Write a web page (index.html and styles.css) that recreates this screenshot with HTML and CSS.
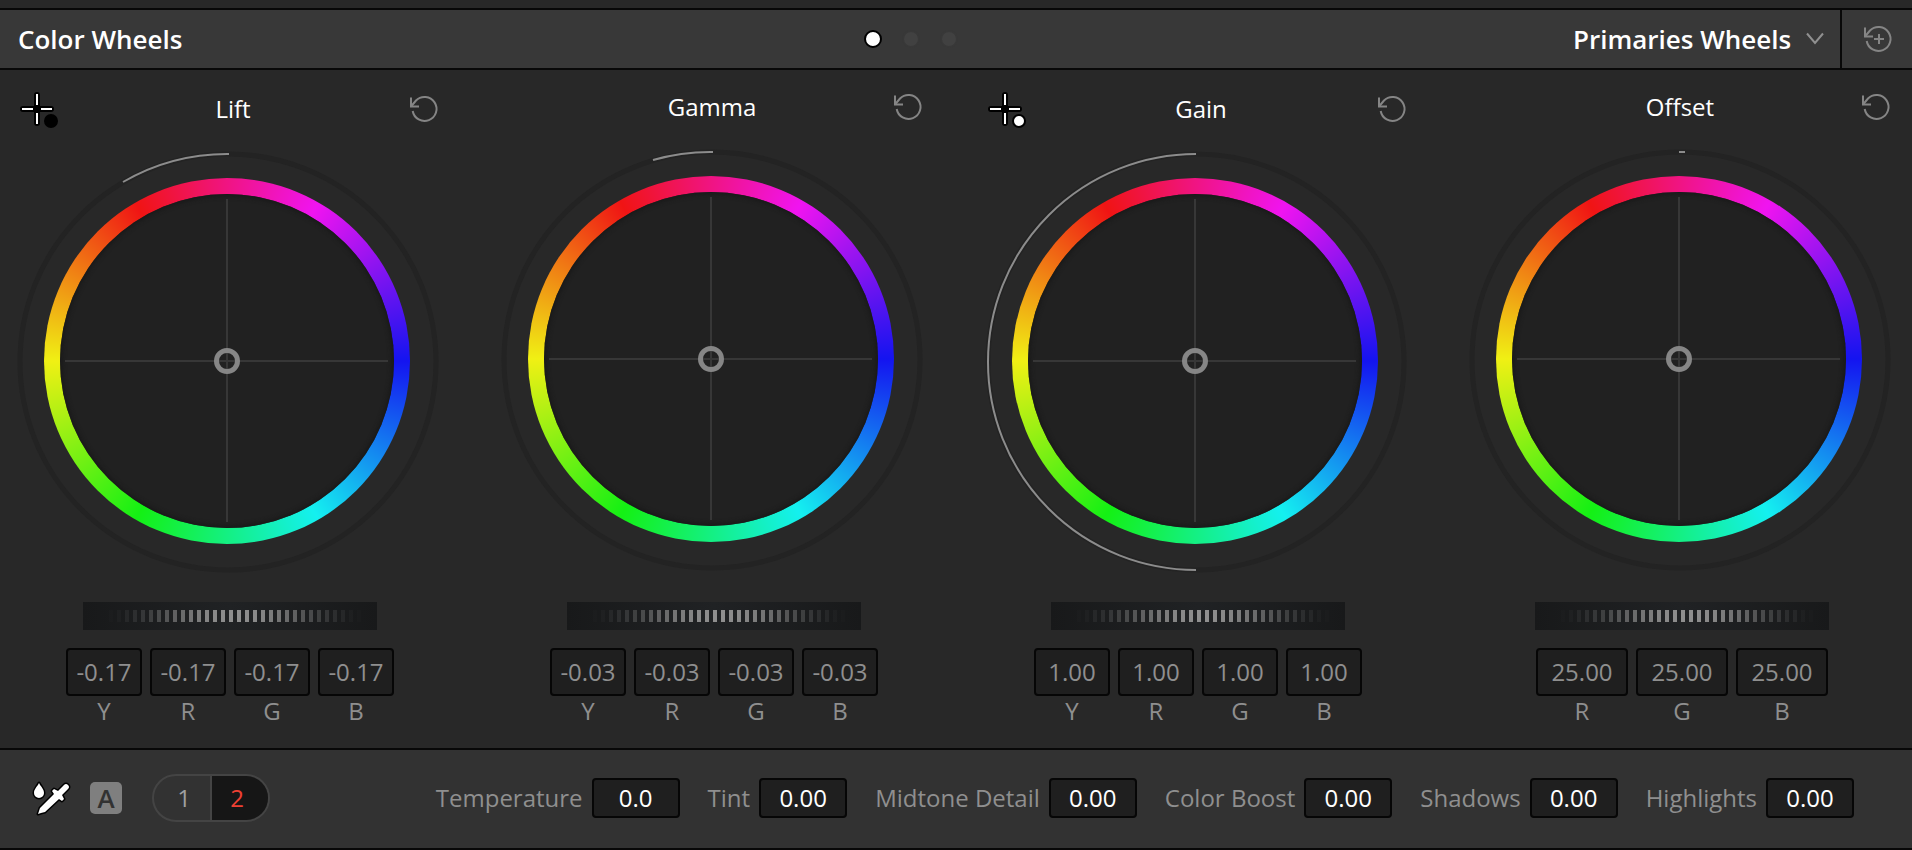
FILE: index.html
```
<!DOCTYPE html>
<html lang="en">
<head>
<meta charset="utf-8">
<title>Color Wheels</title>
<link rel="stylesheet" href="styles.css">
</head>
<body>
<svg class="sprite" aria-hidden="true">
  <symbol id="reset" viewBox="0 0 32 32">
    <path d="M3 12.500L8 6.500A12 12 0 1 1 4.700 17" />
    <path d="M3 3.500V12.500H11" />
  </symbol>
  <symbol id="cross" viewBox="0 0 40 38">
    <path class="cross-edge" d="M5 18H33M19 4V32" />
    <path class="cross-line" d="M4 18H15M23 18H34M19 3V14M19 22V33" />
  </symbol>
</svg>
<main class="panel">
  <header class="topbar">
    <div class="topbar-main">
      <h1 class="title">Color Wheels</h1>
      <nav class="pages" aria-label="Pages">
        <button class="page-dot active" aria-label="Page 1"></button>
        <button class="page-dot" aria-label="Page 2"></button>
        <button class="page-dot" aria-label="Page 3"></button>
      </nav>
      <label class="mode">
        <select class="mode-select" aria-label="Mode"><option>Primaries Wheels</option></select>
        <svg class="chevron" viewBox="0 0 18 14" aria-hidden="true"><path d="M1 1.500L9 11L17 1.500" /></svg>
      </label>
    </div>
    <button class="icon-btn reset-all" aria-label="Reset all">
      <svg class="icon" viewBox="-1 -1 32 32"><use href="#reset" width="32" height="32" /><path d="M17 10V20M12 15H22" /></svg>
    </button>
  </header>

  <section class="wheels" id="wheels"></section>

  <footer class="bottombar">
    <div class="tools">
      <button class="icon-btn" aria-label="White balance picker">
        <svg class="dropper" viewBox="0 0 40 36" aria-hidden="true">
          <path class="outlined" d="M7 3C5 7 2 9 2 13A5 5 0 0 0 12 13C12 9 9 7 7 3Z" />
          <path class="outlined" d="M6 34L8 28L22 14L20 11L22 9L26 11L32 5Q34 3 36 5Q38 7 36 9L30 15L32 19L30 21L27 19L13 32L9 33Z" />
        </svg>
      </button>
      <button class="auto" aria-label="Auto balance">A</button>
      <div class="pager">
        <button class="pager-btn">1</button>
        <button class="pager-btn current">2</button>
      </div>
    </div>
    <div class="params">
      <label class="param">Temperature <input class="field" value="0.0"></label>
      <label class="param">Tint <input class="field" value="0.00"></label>
      <label class="param">Midtone Detail <input class="field" value="0.00"></label>
      <label class="param">Color Boost <input class="field" value="0.00"></label>
      <label class="param">Shadows <input class="field" value="0.00"></label>
      <label class="param">Highlights <input class="field" value="0.00"></label>
    </div>
  </footer>
</main>
<script src="wheels.js"></script>
</body>
</html>
```
FILE: wheels.js
```
const wheels = [
  { name: "Lift", picker: "black", arc: "M212 4A208 208 0 0 0 106 32", channels: "YRGB", value: "-0.17" },
  { name: "Gamma", arc: "M212 4A208 208 0 0 0 152 12", channels: "YRGB", value: "-0.03" },
  { name: "Gain", picker: "white", arc: "M211 4A208 208 0 0 0 211 420", channels: "YRGB", value: "1.00" },
  { name: "Offset", arc: "M210 4H216", channels: "RGB", value: "25.00" }
];

const picker = (tone) => tone
  ? `<button class="icon-btn" aria-label="Pick ${tone} point"><svg class="picker" viewBox="0 0 40 38"><use href="#cross" /><circle class="point ${tone}" cx="33" cy="30" r="6" /></svg></button>`
  : "";

// Jog ticks fade out from the middle to both ends.
let ticks = "";
for (let x = 10; x < 290; x += 8) {
  const fade = Math.cos((x + 2 - 152) / 135 * Math.PI / 2);
  ticks += `<rect x="${x}" y="8" width="4" height="12" opacity="${Math.max(0, fade ** 2).toFixed(2)}" />`;
}

document.getElementById("wheels").innerHTML = wheels.map((w) => `
  <article class="wheel">
    <div class="wheel-head">
      <div class="head-left">${picker(w.picker)}</div>
      <h2 class="wheel-name">${w.name}</h2>
      <button class="icon-btn" aria-label="Reset ${w.name}"><svg class="icon"><use href="#reset" /></svg></button>
    </div>
    <div class="dial">
      <div class="ring"><div class="disc"></div></div>
      <svg class="dial-lines" viewBox="0 0 420 422">
        <circle class="track" cx="211" cy="212" r="208" />
        <path class="arc" d="${w.arc}" />
        <path class="axis" d="M210 49V372M48 211H371" />
        <circle class="puck" cx="210" cy="211" r="10.500" />
      </svg>
    </div>
    <div class="controls">
      <svg class="jog" viewBox="0 0 294 28" role="img" aria-label="${w.name} master">${ticks}</svg>
      <div class="channels">${[...w.channels].map((c) => `
        <label class="channel"><input class="field ${w.channels.length < 4 ? "wide" : "narrow"}" value="${w.value}">${c}</label>`).join("")}
      </div>
    </div>
  </article>`).join("");
```
FILE: styles.css
```
* { box-sizing: border-box; }
body {
  margin: 0;
  background: #282828;
  color: #8f8f8f;
  font-family: "Open Sans", "Noto Sans", sans-serif;
  font-size: 24px;
  line-height: 32px;
}
button, input, select {
  margin: 0;
  padding: 0;
  border: 0;
  background: none;
  color: inherit;
  font: inherit;
}
h1, h2 { margin: 0; }
svg { display: block; fill: none; }
.sprite { display: none; }
.panel { min-height: 100vh; padding-top: 8px; display: flex; flex-direction: column; }

.topbar {
  display: flex;
  border-top: 2px solid #080808;
  border-bottom: 2px solid #080808;
  background: #383838;
  height: 62px;
}
.topbar-main {
  flex: 1;
  display: grid;
  grid-template-columns: 1fr auto 1fr;
  align-items: center;
  padding: 0 16px 0 18px;
}
.title, .mode-select { color: #fff; font-size: 26px; font-weight: 600; line-height: 36px; }
.pages { display: flex; gap: 20px; padding-right: 20px; }
.page-dot { width: 18px; height: 18px; border: 2px solid #383838; border-radius: 50%; background: #414141; }
.page-dot.active { border-color: #000; background: #fff; }
.mode { display: flex; align-items: center; justify-content: flex-end; gap: 14px; }
.mode-select { appearance: none; }
.chevron { width: 18px; height: 14px; stroke: #909090; stroke-width: 2; }
.reset-all { width: 72px; border-left: 2px solid #080808; }

.icon-btn { display: flex; align-items: center; justify-content: center; }
.icon { width: 32px; height: 32px; stroke: #858585; stroke-width: 2; }

.wheels {
  flex: 1;
  display: grid;
  grid-template-columns: repeat(4, 1fr);
  gap: 30px;
  padding: 20px 6px 0 0;
}
.wheel { display: flex; flex-direction: column; align-items: center; }
.wheel-head {
  align-self: stretch;
  display: flex;
  justify-content: space-between;
  align-items: center;
  height: 40px;
  padding: 0 14px 0 18px;
}
.head-left { min-width: 30px; }
.wheel-name { padding-bottom: 2px; color: #fff; font-size: 24px; font-weight: 400; }
.picker { width: 40px; height: 38px; }
.cross-edge { stroke: #000; stroke-width: 6; stroke-linecap: round; }
.cross-line { stroke: #fff; stroke-width: 2; }
.point { stroke: #000; stroke-width: 2; }
.point.black { fill: #000; }
.point.white { fill: #fff; }

.dial { display: grid; place-items: center; margin: 20px 0 30px; }
.wheel:nth-child(even) { margin-top: -2px; }
.wheel:nth-child(even) .dial { margin-bottom: 32px; }
.ring, .dial-lines { grid-area: 1 / 1; }
.ring {
  width: 366px;
  height: 366px;
  padding: 16px;
  border-radius: 50%;
  background: conic-gradient(from 30deg, #f014f0, #1414f0 60deg, #14f0f0 120deg, #14f014 180deg, #f0f014 240deg, #f01414 300deg, #f014f0);
}
.disc { height: 100%; border-radius: 50%; background: #212121; box-shadow: inset 0 0 4px 2px #191919; }
.dial-lines { width: 420px; height: 422px; overflow: visible; }
.track { stroke: #232323; stroke-width: 5; }
.arc { stroke: #8c8c8c; stroke-width: 2; }
.axis { stroke: #373737; stroke-width: 2; }
.puck { stroke: #868686; stroke-width: 5; }

.controls { display: flex; flex-direction: column; align-items: center; gap: 18px; padding-left: 6px; }
.jog {
  width: 294px;
  height: 28px;
  fill: #8f8f8f;
  background: linear-gradient(90deg, #18191a, #202224 50%, #18191a);
}
.channels { display: flex; gap: 8px; }
.channel { display: flex; flex-direction: column; align-items: center; line-height: 30px; }
.field {
  width: 88px;
  height: 40px;
  padding-bottom: 2px;
  border: 2px solid #060606;
  border-radius: 4px;
  background: #1f1f1f;
  color: #fff;
  text-align: center;
}
.channel .field { height: 48px; color: #8f8f8f; }
.channel .narrow { width: 76px; }
.channel .wide { width: 92px; }

.bottombar {
  display: flex;
  align-items: center;
  justify-content: space-between;
  height: 102px;
  padding: 0 58px 2px 32px;
  border-top: 2px solid #080808;
  border-bottom: 2px solid #080808;
  background: #323232;
}
.tools { display: flex; align-items: center; }
.dropper { width: 40px; height: 36px; }
.outlined { fill: #fff; stroke: #000; stroke-width: 3; paint-order: stroke; stroke-linejoin: round; }
.auto {
  width: 32px;
  height: 32px;
  margin: 0 30px 0 18px;
  border-radius: 5px;
  background: #7f7f7f;
  color: #323232;
  font-size: 26px;
  font-weight: 600;
}
.pager { display: flex; height: 48px; border: 2px solid #444; border-radius: 24px; overflow: hidden; }
.pager-btn { width: 56px; padding-left: 4px; color: #a0a0a0; }
.pager-btn.current { width: 58px; padding: 0 6px 0 0; border-left: 2px solid #444; background: #161616; color: #ee4033; }
.params { display: flex; gap: 28px; }
.param { display: flex; align-items: center; gap: 9px; }
```
